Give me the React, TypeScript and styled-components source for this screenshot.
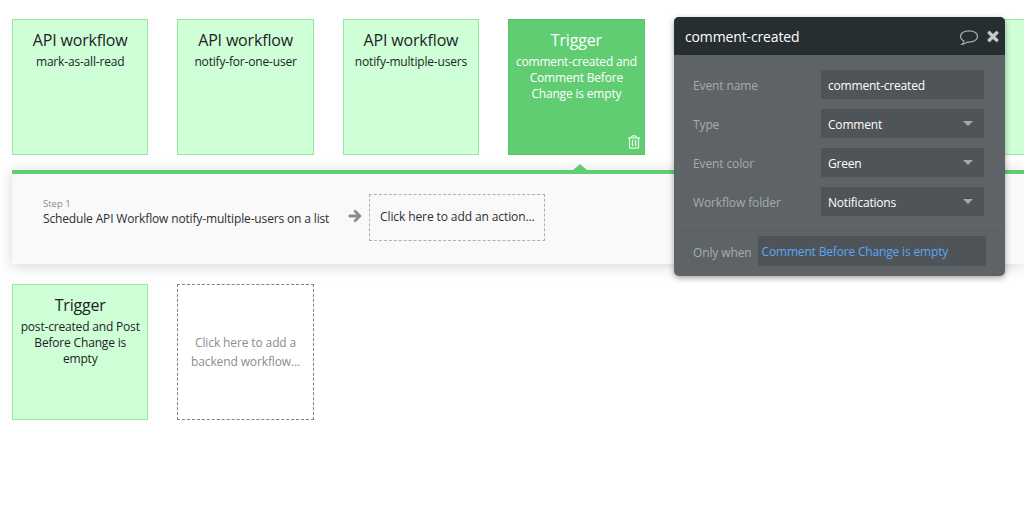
import React from "react";
import styled, { createGlobalStyle } from "styled-components";
import { FaArrowRight, FaRegTrashAlt, FaTimes } from "react-icons/fa";

const Global = createGlobalStyle`
  html, body { margin: 0; padding: 0; background: #fff; overflow: hidden; }
  body { font-family: "Open Sans", "Liberation Sans", sans-serif; }
  #root { width: 1024px; height: 529px; }
`;

const Page = styled.div`
  position: relative;
  width: 1024px;
  height: 529px;
  overflow: hidden;
  padding-top: 19px;
  box-sizing: border-box;
`;

const CardRow = styled.div`
  display: flex;
  gap: 29px;
  padding-left: 12px;
  width: 1400px;
`;

const Card = styled.div<{ $active?: boolean }>`
  position: relative;
  flex: 0 0 136.4px;
  height: 136px;
  box-sizing: border-box;
  padding: 10px 5px 0;
  text-align: center;
  border: 1px solid ${(p) => (p.$active ? "#58c36a" : "#96e6a4")};
  background: ${(p) => (p.$active ? "#61cd73" : "#ceffd6")};
  color: ${(p) => (p.$active ? "#fff" : "#1d2326")};
`;

const CardTitle = styled.div`
  font-size: 16px;
  letter-spacing: -0.17px;
  line-height: 20px;
  margin-bottom: 4px;
`;

const CardText = styled.div`
  font-size: 12px;
  letter-spacing: -0.18px;
  line-height: 16px;
`;

const TrashIcon = styled(FaRegTrashAlt)`
  position: absolute;
  right: 4px;
  bottom: 5px;
  width: 12px;
  height: 14px;
  color: #e4f8e7;
`;

const StepBar = styled.div`
  position: relative;
  margin: 15px 0 20px 12px;
  height: 94px;
  box-sizing: border-box;
  border-top: 4px solid #61cd73;
  background: #f9f9f9;
  box-shadow: 0 2px 14px rgba(0, 0, 0, 0.17);
  display: flex;
  align-items: flex-start;
  padding: 20px 0 0 31px;
`;

const Notch = styled.div`
  position: absolute;
  left: 561px;
  top: -10px;
  width: 0;
  height: 0;
  border-left: 7px solid transparent;
  border-right: 7px solid transparent;
  border-bottom: 6px solid #61cd73;
`;

const Step = styled.div`
  width: 305px;
  margin-top: 3px;
  color: #2b2f31;
  font-size: 12px;
  letter-spacing: -0.15px;
  line-height: 16px;
`;

const StepLabel = styled.div`
  color: #8a8a8a;
  font-size: 9.5px;
  letter-spacing: 0;
  line-height: 14px;
`;

const ArrowIcon = styled(FaArrowRight)`
  width: 14px;
  height: 14px;
  margin-top: 15px;
  color: #8b8b8b;
  flex: none;
  margin-right: 7px;
  stroke: currentColor;
  stroke-width: 30px;
`;

const AddAction = styled.div`
  width: 176px;
  height: 47px;
  box-sizing: border-box;
  border: 1px dashed #b0b0b0;
  font-size: 12px;
  letter-spacing: -0.1px;
  line-height: 43px;
  padding-left: 10px;
  color: #2b2f31;
`;

const AddWorkflow = styled.div`
  flex: 0 0 136.4px;
  height: 136px;
  box-sizing: border-box;
  border: 1px dashed #808284;
  display: flex;
  align-items: center;
  justify-content: center;
  text-align: center;
  font-size: 12px;
  letter-spacing: -0.12px;
  line-height: 19.5px;
  color: #8b8d8f;
`;

const Panel = styled.div`
  position: absolute;
  left: 674px;
  top: 17px;
  width: 331px;
  height: 259px;
  background: #5e6367;
  border-radius: 5px;
  box-shadow: 0 2px 6px rgba(0, 0, 0, 0.35);
  overflow: hidden;
  display: flex;
  flex-direction: column;
`;

const PanelHeader = styled.div`
  height: 38px;
  flex: none;
  background: #272e30;
  color: #fff;
  display: flex;
  align-items: center;
  padding: 0 5px 0 11px;
  font-size: 14px;
  letter-spacing: -0.13px;
`;

const PanelTitle = styled.div`
  flex: 1;
`;

const CommentIcon = styled.svg`
  width: 18px;
  height: 15px;
  margin: 2px 8px 0 0;
  fill: none;
  stroke: #a8aeb1;
  stroke-width: 1.2;
`;

const CloseIcon = styled(FaTimes)`
  width: 14px;
  height: 15px;
  color: #c9cccd;
  stroke: currentColor;
  stroke-width: 30px;
`;

const PanelBody = styled.div`
  padding: 15px 21px 0 19px;
  height: 170px;
  box-sizing: border-box;
  display: flex;
  flex-direction: column;
  gap: 10px;
  border-bottom: 1px solid #63686c;
  flex: none;
`;

const FieldRow = styled.div`
  display: grid;
  grid-template-columns: 128px 1fr;
  align-items: center;
  height: 29px;
`;

const FieldLabel = styled.div`
  color: #a7abae;
  font-size: 12px;
  letter-spacing: -0.12px;
  padding-top: 2px;
`;

const FieldBox = styled.div`
  height: 29px;
  box-sizing: border-box;
  background: #4f5458;
  color: #fff;
  font-size: 12px;
  letter-spacing: -0.2px;
  padding: 2px 7px 0;
  display: flex;
  align-items: center;
  justify-content: space-between;
`;

const Caret = styled.div`
  width: 0;
  height: 0;
  border-left: 5px solid transparent;
  border-right: 5px solid transparent;
  border-top: 5px solid #a4a8ab;
  margin: -2px 4px 0 0;
`;

const Footer = styled.div`
  display: flex;
  align-items: center;
  gap: 6px;
  padding: 11px 19px 0 19px;
`;

const ConditionBox = styled.div`
  flex: 1;
  height: 30px;
  background: #4f5458;
  color: #5aa7f5;
  font-size: 12px;
  letter-spacing: -0.17px;
  line-height: 32px;
  padding-left: 4px;
`;

const fields = [
  { label: "Type", value: "Comment" },
  { label: "Event color", value: "Green" },
  { label: "Workflow folder", value: "Notifications" },
];

const topCards = [
  { title: "API workflow", text: "mark-as-all-read" },
  { title: "API workflow", text: "notify-for-one-user" },
  { title: "API workflow", text: "notify-multiple-users" },
];

export default function App() {
  return (
    <Page>
      <Global />
      <CardRow>
        {topCards.map((c) => (
          <Card key={c.text}>
            <CardTitle>{c.title}</CardTitle>
            <CardText>{c.text}</CardText>
          </Card>
        ))}
        <Card $active>
          <CardTitle>Trigger</CardTitle>
          <CardText>comment-created and Comment Before Change is empty</CardText>
          <TrashIcon />
        </Card>
        <Card />
        <Card />
        <Card />
      </CardRow>
      <StepBar>
        <Notch />
        <Step>
          <StepLabel>Step 1</StepLabel>
          Schedule API Workflow notify-multiple-users on a list
        </Step>
        <ArrowIcon />
        <AddAction>Click here to add an action...</AddAction>
      </StepBar>
      <CardRow>
        <Card>
          <CardTitle>Trigger</CardTitle>
          <CardText>post-created and Post Before Change is empty</CardText>
        </Card>
        <AddWorkflow>
          Click here to add a
          <br />
          backend workflow...
        </AddWorkflow>
      </CardRow>
      <Panel>
        <PanelHeader>
          <PanelTitle>comment-created</PanelTitle>
          <CommentIcon viewBox="0 0 18 15">
            <path d="M7 12.1C11.8 12.6 17.5 10.5 17.5 6.5C17.5 3 13.7 .8 9 .8C4.3 .8 .5 3 .5 6.5C.5 8.5 1.8 10 4 11C3.7 12.5 2.8 13.6 1.8 14.4C4 14.2 5.8 13.3 7 12.1Z" />
          </CommentIcon>
          <CloseIcon />
        </PanelHeader>
        <PanelBody>
          <FieldRow>
            <FieldLabel>Event name</FieldLabel>
            <FieldBox>comment-created</FieldBox>
          </FieldRow>
          {fields.map((f) => (
            <FieldRow key={f.label}>
              <FieldLabel>{f.label}</FieldLabel>
              <FieldBox>
                {f.value}
                <Caret />
              </FieldBox>
            </FieldRow>
          ))}
        </PanelBody>
        <Footer>
          <FieldLabel>Only when</FieldLabel>
          <ConditionBox>Comment Before Change is empty</ConditionBox>
        </Footer>
      </Panel>
    </Page>
  );
}
